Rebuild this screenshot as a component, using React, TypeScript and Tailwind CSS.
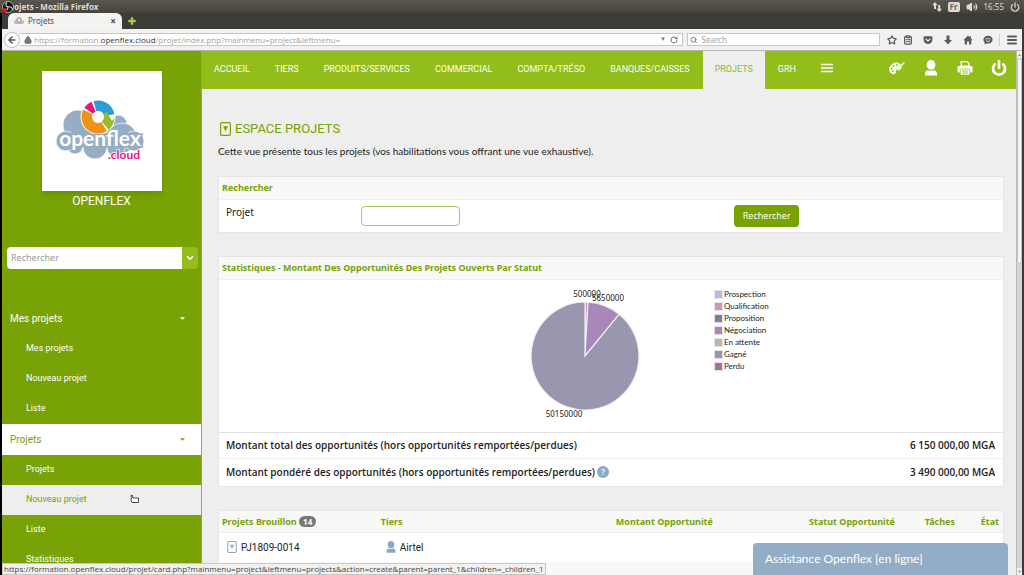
import type { ReactNode } from "react"
import {
  ArrowLeft,
  ChevronDown,
  ClipboardList,
  Lock,
  Menu,
  Power,
  RotateCw,
  Search,
  Star,
  Volume2,
} from "lucide-react"
import { FaGetPocket, FaPlus } from "react-icons/fa"

const navItems = [
  "ACCUEIL",
  "TIERS",
  "PRODUITS/SERVICES",
  "COMMERCIAL",
  "COMPTA/TRÉSO",
  "BANQUES/CAISSES",
  "PROJETS",
  "GRH",
]

const sideMenu = [
  { title: "Mes projets", open: false, items: ["Mes projets", "Nouveau projet", "Liste"] },
  { title: "Projets", open: true, items: ["Projets", "Nouveau projet", "Liste", "Statistiques"] },
]

const statuses = [
  { label: "Prospection", value: 0, color: "#bdb9dc" },
  { label: "Qualification", value: 500000, color: "#c99ab4" },
  { label: "Proposition", value: 0, color: "#778296" },
  { label: "Négociation", value: 5650000, color: "#a888bb" },
  { label: "En attente", value: 0, color: "#b6bba2" },
  { label: "Gagné", value: 50150000, color: "#9997b0" },
  { label: "Perdu", value: 0, color: "#a07a8a" },
]

const ui = "font-['Noto_Sans',sans-serif]"

function TitleBar() {
  return (
    <div className="flex h-[13px] shrink-0 items-center justify-between bg-linear-to-b from-[#59574d] to-[#45433c] pr-1 pl-0.5 text-[#dfdbd2]">
      <div className="flex items-center">
        <svg className="size-3" viewBox="0 0 12 12" aria-hidden="true">
          <circle cx="6" cy="6" r="5.5" fill="#111" stroke="#ddd" strokeWidth=".7" />
          <path d="M6 6C3 5 3.500 2.500 5 1.500M6 6c3-1 4.500 1 4.500 3M6 6c0 3-2 4-4 3" fill="none" stroke="#ddd" strokeWidth="1.100" />
          <circle cx="2.600" cy="9.200" r="2.300" fill="#e11" />
        </svg>
        <span className="text-[8px] leading-3 font-bold">ojets - Mozilla Firefox</span>
      </div>
      <div className="flex items-center gap-1.5 text-[8px] leading-3">
        <svg className="size-2.5" viewBox="0 0 10 10" fill="currentColor" aria-hidden="true">
          <path d="M3 0l2.800 3.200H4V7H2V3.200H.2zM7.200 10L4.400 6.800h1.800V3h2v3.800H10z" />
        </svg>
        <span className="rounded-xs bg-[#dfdbd2] px-0.5 leading-[10px] font-bold text-[#6b6960]">Fr</span>
        <Volume2 className="size-3 fill-current" />
        <span>16:55</span>
        <Power className="size-2.5" strokeWidth={3} />
      </div>
    </div>
  )
}

function TabStrip() {
  return (
    <div className="flex h-4 shrink-0 items-end bg-[#3c3b37] pl-1.5">
      <div className="flex h-4 w-[114px] items-center gap-1 rounded-t-md bg-[#f4f3f2] px-1.5 text-[#4c4c4c]">
        <svg className="h-2 w-2.5" viewBox="0 0 10 8" aria-hidden="true">
          <path d="M2 7a2 2 0 0 1 0-4 3 3 0 0 1 6 0 2 2 0 0 1 0 4z" fill="#a9bacf" />
          <circle cx="5" cy="3" r="1.500" fill="#fff" stroke="#ee9a3a" strokeWidth=".8" />
        </svg>
        <span className="grow text-[8px] leading-4">Projets</span>
        <button aria-label="Fermer l'onglet" className="text-[10px] leading-3 font-bold">×</button>
      </div>
      <button aria-label="Nouvel onglet" className="mb-1 ml-1.5 text-[#b4cf4a]">
        <FaPlus className="size-2 stroke-current stroke-[60]" />
      </button>
    </div>
  )
}

function Toolbar() {
  return (
    <div className="flex h-[21px] shrink-0 items-center bg-[#f2f1f0] pr-1 text-[#5b5b5b]">
      <button aria-label="Précédent" className="ml-0.5 flex size-4 shrink-0 items-center justify-center rounded-full border border-[#c4c2bf] bg-white">
        <ArrowLeft className="size-2.5" strokeWidth={4} />
      </button>
      <div className="flex h-[13px] min-w-0 grow items-center gap-0.5 border border-l-0 border-[#c9c7c4] bg-white px-1 text-[8px] text-[#a3a3a3]">
        <Lock className="size-2 shrink-0 fill-current text-[#777]" strokeWidth={3} />
        <span className="grow font-['Open_Sans',sans-serif] leading-3 whitespace-nowrap">
          https://formation.<span className="text-[#333]">openflex.cloud</span>/projet/index.php?mainmenu=project&amp;leftmenu=
        </span>
        <span className="pr-0.5 text-[6px] text-[#777]">▼</span>
        <RotateCw className="size-2 text-[#777]" strokeWidth={3} />
      </div>
      <div className="ml-1 flex h-[13px] w-[193px] items-center gap-1 border border-[#c9c7c4] bg-white px-0.5">
        <Search className="size-2 text-[#777]" strokeWidth={3} />
        <input aria-label="Search" placeholder="Search" className="w-full text-[8px] leading-3 outline-none placeholder:text-[#a3a3a3]" />
      </div>
      <div className="ml-[7px] flex items-center gap-2.5">
        <Star className="size-2.5" strokeWidth={3} />
        <ClipboardList className="-ml-1 size-2.5" strokeWidth={3} />
        <FaGetPocket className="size-2.5" />
        <svg className="size-2.5" viewBox="0 0 10 10" fill="currentColor" aria-hidden="true">
          <path d="M3.500.5h3V5h2.500L5 9.500 1 5h2.500z" />
        </svg>
        <svg className="size-2.5" viewBox="0 0 10 10" fill="currentColor" aria-hidden="true">
          <path d="M5 .5L.3 5.300h1.400V9.500h2.300V6.500h2v3h2.300V5.300h1.400L8 3.500V1.200H6.800v1.100z" />
        </svg>
        <svg className="size-2.5" viewBox="0 0 10 10" aria-hidden="true">
          <path d="M5 .8a4.500 3.900 0 0 0-3.200 6.700L1.500 9.500l2.200-1.100A4.500 3.900 0 1 0 5 .8z" fill="currentColor" />
          <path d="M2.500 3.800h5M2.800 5.200c1 1.600 3.400 1.600 4.400 0" fill="none" stroke="#f2f1f0" strokeWidth=".8" />
        </svg>
        <span className="-mx-1 h-3 w-px bg-[#d0cecb]" />
        <Menu className="size-3" strokeWidth={4} />
      </div>
    </div>
  )
}

function Logo() {
  return (
    <svg className="size-[120px] bg-white shadow-md" viewBox="0 0 120 120" role="img" aria-label="openflex.cloud">
      <g fill="#97adc6" stroke="#fff" strokeWidth=".7">
        <circle cx="36" cy="54" r="15" />
        <circle cx="76" cy="53" r="9" />
        <circle cx="80" cy="67" r="15" />
        <circle cx="33" cy="75" r="8" />
        <circle cx="74" cy="77" r="9" />
        <circle cx="53" cy="76" r="12" />
        <circle cx="24" cy="70" r="10" />
        <circle cx="92" cy="70" r="10" />
      </g>
      <path d="M24 62h68v14H24z" fill="#97adc6" />
      <circle cx="56" cy="46" r="17.500" fill="#fff" />
      <g fill="none" strokeWidth="10.500">
        <circle cx="56" cy="46" r="11.300" stroke="#2f9bd3" pathLength="360" strokeDasharray="96 264" strokeDashoffset="-254" />
        <circle cx="56" cy="46" r="11.300" stroke="#93bf25" pathLength="360" strokeDasharray="54 306" transform="rotate(-4 56 46)" />
        <circle cx="56" cy="46" r="11.300" stroke="#f09312" pathLength="360" strokeDasharray="150 210" strokeDashoffset="-57" />
        <circle cx="56" cy="46" r="11.300" stroke="#e5167f" pathLength="360" strokeDasharray="33 327" strokeDashoffset="-214" />
      </g>
      <text x="58" y="75" textAnchor="middle" fill="#fff" stroke="#97adc6" strokeWidth="3" paintOrder="stroke" className="font-['Lato',sans-serif] text-[21px] font-bold">
        openflex
      </text>
      <text x="98" y="88" textAnchor="end" fill="#e5167f" stroke="#fff" strokeWidth="1.500" paintOrder="stroke" className="font-['Lato',sans-serif] text-[12px] font-bold">
        .cloud
      </text>
    </svg>
  )
}

function Sidebar() {
  return (
    <aside className="flex w-[200px] shrink-0 flex-col border-r border-[#8fae4a] bg-[#78a206] pt-5 font-['Roboto',sans-serif] text-white">
      <div className="flex flex-col items-center">
        <Logo />
        <p className="mt-0.5 text-[12px] leading-4">OPENFLEX</p>
      </div>
      <form className="mt-[38px] mr-[3px] ml-[5px] flex h-6 overflow-hidden rounded-sm">
        <input
          aria-label="Rechercher"
          placeholder="Rechercher"
          className={`${ui} w-full min-w-0 bg-white px-1 text-[9px] text-gray-700 outline-none placeholder:text-[#9a9a9a]`}
        />
        <button type="button" aria-label="Options de recherche" className="flex w-4 shrink-0 items-center justify-center bg-[#95bd1a]">
          <ChevronDown className="size-2.5" strokeWidth={4} />
        </button>
      </form>
      <nav className="mt-[34px]">
        {sideMenu.map((group) => (
          <div key={group.title}>
            <a
              href="#"
              className={`flex h-[31px] items-center justify-between pr-4 pl-2 text-[10px] ${group.open ? "bg-white text-[#78a206]" : ""}`}
            >
              {group.title}
              <svg className="h-[3px] w-[5px]" viewBox="0 0 6 3" aria-hidden="true">
                <path d="M0 0h6L3 3z" fill="currentColor" />
              </svg>
            </a>
            {group.items.map((item) => (
              <a
                key={item}
                href="#"
                className={`flex h-[30px] items-center pl-6 text-[9px] ${group.open && item === "Nouveau projet" ? "bg-[#eee] text-[#78a206]" : ""}`}
              >
                {item}
              </a>
            ))}
          </div>
        ))}
      </nav>
    </aside>
  )
}

function UserIcon({ className }: { className: string }) {
  return (
    <svg className={className} viewBox="0 0 12 16" fill="currentColor" aria-hidden="true">
      <ellipse cx="6" cy="4.900" rx="4.400" ry="4.800" />
      <path d="M0 15.500v-2C0 11.500 1.500 10.300 3 9.900c1.700 1.200 4.300 1.200 6 0 1.500.4 3 1.600 3 3.600v2z" />
    </svg>
  )
}

function ProjectIcon({ className }: { className: string }) {
  return (
    <svg className={className} viewBox="0 0 11 14" fill="none" stroke="currentColor" aria-hidden="true">
      <rect x=".6" y=".6" width="9.800" height="12.800" rx="1.200" strokeWidth="1.200" />
      <path d="M3 4.300h5L6.500 7 5.500 9.700 4.500 7z" fill="currentColor" stroke="none" />
    </svg>
  )
}

function TopNav() {
  return (
    <header className="flex h-[38px] items-stretch bg-[#93bd1a] font-['Roboto',sans-serif] text-white">
      <nav className="flex gap-px text-[9px] whitespace-nowrap">
        {navItems.map((item) => (
          <a
            key={item}
            href="#"
            className={`flex items-center px-3 ${item === "PROJETS" ? "bg-[#eee] text-[#93bd1a]" : ""}`}
          >
            {item}
          </a>
        ))}
      </nav>
      <button aria-label="Plus" className="ml-3 pb-1">
        <svg className="h-3 w-3.5" viewBox="0 0 14 12" aria-hidden="true">
          <path d="M1 2.500h12M1 6h12M1 9.500h12" stroke="#fff" strokeWidth="1.600" />
        </svg>
      </button>
      <div className="ml-auto flex items-center gap-[18px] pr-[9px] pb-1">
        <button aria-label="Thème">
          <svg className="size-4" viewBox="0 0 16 16" aria-hidden="true">
            <path d="M11 4.500C9.500 2.800 6.500 2.200 3.800 4 .5 6 0 9.500 1.200 11.800c1.200 2.200 4 2.700 5 1.200.8-1.200-.2-2.200.6-3 .9-.9 2.200.4 3.700-.2 1.400-.6 2-2 1.700-3.400z" fill="#fff" stroke="#fff" strokeWidth=".8" />
            <g fill="#93bd1a">
              <circle cx="4.600" cy="6" r="1" />
              <circle cx="8" cy="4.900" r="1" />
              <circle cx="2.800" cy="8.700" r="1" />
              <circle cx="4" cy="11.300" r="1" />
            </g>
            <path d="M6.500 9.300c.2-1.600 1.400-2.500 3-2.300L14.500 2l1.500-.2-.5 1.700L10.800 8.200c-.6 1.400-2 2-4.300 1.100z" fill="#fff" stroke="#93bd1a" strokeWidth=".4" />
          </svg>
        </button>
        <button aria-label="Utilisateur">
          <UserIcon className="h-4 w-4" />
        </button>
        <button aria-label="Imprimer">
          <svg className="size-4" viewBox="0 0 16 16" aria-hidden="true">
            <path d="M3.500 1h7l2 2v3h-9z" fill="#fff" />
            <path d="M4.800 2.300h5l1.400 1.300v2H4.800z" fill="#93bd1a" />
            <rect x=".5" y="6" width="15" height="6.500" rx="1.200" fill="#fff" />
            <rect x="3.300" y="9" width="9.400" height="6" rx=".6" fill="#fff" stroke="#93bd1a" strokeWidth=".7" />
            <path d="M5 11h6M5 13h6" stroke="#93bd1a" strokeWidth=".9" />
          </svg>
        </button>
        <button aria-label="Déconnexion">
          <Power className="size-4" strokeWidth={4} />
        </button>
      </div>
    </header>
  )
}

function Panel({ children }: { children: ReactNode }) {
  return <section className="mb-[23px] border border-[#e6e6e6] bg-white">{children}</section>
}

function PanelTitle({ children }: { children: ReactNode }) {
  return (
    <h2 className="border-b border-[#eee] bg-[#f8f8f8] px-[3px] text-[9px] leading-[22px] font-bold text-[#78a206]">
      {children}
    </h2>
  )
}

function PieChart() {
  const total = statuses.reduce((sum, s) => sum + s.value, 0)
  const r = 54
  let angle = 0
  const slices = statuses
    .filter((s) => s.value > 0)
    .map((s) => {
      const start = angle
      angle += (s.value / total) * Math.PI * 2
      const large = angle - start > Math.PI ? 1 : 0
      const from = `${65 + r * Math.sin(start)} ${76 - r * Math.cos(start)}`
      const to = `${65 + r * Math.sin(angle)} ${76 - r * Math.cos(angle)}`
      return { ...s, d: `M65 76L${from}A${r} ${r} 0 ${large} 1 ${to}z` }
    })

  return (
    <div className="ml-[38%] flex gap-16 pl-[3px] text-[8px] text-[#222]">
      <svg className="h-[152px] w-[130px] shrink-0" viewBox="0 0 130 152" role="img" aria-label="Opportunités par statut">
        {slices.map((s) => (
          <path key={s.label} d={s.d} fill={s.color} stroke="#f3eef5" strokeWidth="1.200" />
        ))}
        <g textAnchor="middle" fill="#222">
          <text x="67" y="17">500000</text>
          <text x="88" y="21">5650000</text>
          <text x="44" y="137">50150000</text>
        </g>
      </svg>
      <ul className="mt-2 font-['Lato',sans-serif]">
        {statuses.map((s) => (
          <li key={s.label} className="flex items-center leading-3">
            <span className="size-[9px] border border-[#e6e0ea]" style={{ backgroundColor: s.color }} />
            <span className="pl-px">{s.label}</span>
          </li>
        ))}
      </ul>
    </div>
  )
}

function Content() {
  return (
    <main className="pt-8 pr-3 pl-4 text-[#222]">
      <h1 className="flex items-center gap-1 font-['Roboto',sans-serif] text-[13px] leading-4 text-[#78a206]">
        <ProjectIcon className="ml-0.5 h-3.5 w-[11px]" />
        ESPACE PROJETS
      </h1>
      <p className="mt-1.5 mb-[17px] font-['Lato',sans-serif] text-[10px] leading-4">
        Cette vue présente tous les projets (vos habilitations vous offrant une vue exhaustive).
      </p>

      <Panel>
        <PanelTitle>Rechercher</PanelTitle>
        <form className="grid h-8 grid-cols-[35fr_97fr_68fr] items-center px-[7px] text-[10px]">
          <label htmlFor="projet" className="self-start leading-6">Projet</label>
          <input id="projet" className="h-5 w-[99px] rounded-sm border border-[#a9c763] bg-white px-1 outline-none" />
          <button type="button" className="h-[22px] w-[65px] rounded-sm bg-[#78a206] text-[9px] text-white">
            Rechercher
          </button>
        </form>
      </Panel>

      <Panel>
        <PanelTitle>Statistiques - Montant Des Opportunités Des Projets Ouverts Par Statut</PanelTitle>
        <PieChart />
        <table className="w-full font-['Open_Sans',sans-serif] text-[10px] font-semibold">
          <tbody>
            <tr className="h-[26px] border-t border-[#e2e2e2]">
              <td className="pl-[7px]">Montant total des opportunités (hors opportunités remportées/perdues)</td>
              <td className="pr-2 text-right">6 150 000,00 MGA</td>
            </tr>
            <tr className="h-[27px] border-t border-[#eee]">
              <td className="pl-[7px]">
                <span className="flex items-center gap-0.5">
                  Montant pondéré des opportunités (hors opportunités remportées/perdues)
                  <span className="flex size-3 items-center justify-center rounded-full bg-[#8ba8c6] text-[9px] leading-3 text-white">
                    ?
                  </span>
                </span>
              </td>
              <td className="pr-2 text-right">3 490 000,00 MGA</td>
            </tr>
          </tbody>
        </table>
      </Panel>

      <Panel>
        <table className="w-full table-fixed text-[9px]">
          <thead>
            <tr className="h-[22px] bg-[#f8f8f8] text-[#78a206]">
              <th className="w-[20%] pl-[3px] text-left">
                Projets Brouillon{" "}
                <span className="rounded-full bg-[#777] px-1 text-[8px] text-white">14</span>
              </th>
              <th className="w-[19%] pl-[5px] text-left">Tiers</th>
              <th className="w-[24%] text-right">Montant Opportunité</th>
              <th className="text-right">Statut Opportunité</th>
              <th className="w-[60px] text-right">Tâches</th>
              <th className="w-12 pr-1 text-right">État</th>
            </tr>
          </thead>
          <tbody className="font-['Roboto',sans-serif] text-[10px]">
            <tr className="h-[29px] border-t border-[#eee]">
              <td className="pl-2">
                <a href="#" className="flex items-center gap-1">
                  <ProjectIcon className="h-3 w-2.5 text-[#8ba8c6]" />
                  PJ1809-0014
                </a>
              </td>
              <td className="pl-2.5">
                <a href="#" className="flex items-center gap-1">
                  <UserIcon className="h-3 w-2.5 text-[#8ba8c6]" />
                  Airtel
                </a>
              </td>
              <td colSpan={4} />
            </tr>
            <tr className="h-[29px] bg-[#f8f8f8]">
              <td colSpan={6} />
            </tr>
          </tbody>
        </table>
      </Panel>
    </main>
  )
}

function Scrollbar() {
  return (
    <div className="flex w-1.5 shrink-0 flex-col items-center justify-between border-l border-[#bbb] bg-[#d6d4d1] text-[4px] text-[#777]">
      <span className="w-full bg-[#f2f1f0] text-center leading-[7px]">▲</span>
      <span className="h-[206px] w-full rounded-sm border border-[#c4c2bf] bg-[#f6f5f4]" />
      <span className="grow" />
      <span className="w-full bg-[#f2f1f0] text-center leading-[7px]">▼</span>
    </div>
  )
}

export default function App() {
  return (
    <div className={`${ui} relative flex h-screen flex-col overflow-hidden bg-[#3c3b37]`}>
      <TitleBar />
      <div className="flex min-h-0 grow flex-col border-r-2 border-l-2 border-r-[#3c3b37] border-l-black">
        <TabStrip />
        <Toolbar />
        <div className="flex min-h-0 grow border-t border-[#b5b5b5] bg-[#eee]">
          <Sidebar />
          <div className="min-w-0 grow overflow-hidden">
            <TopNav />
            <Content />
          </div>
          <Scrollbar />
        </div>
      </div>

      <button className="absolute right-4 bottom-0 h-8 w-[255px] rounded-t-sm bg-[#94adc6] px-3 text-left font-['Lato',sans-serif] text-[12px] text-white">
        Assistance Openflex [en ligne]
      </button>
      <div className="absolute bottom-0 left-0.5 border border-[#c9c7c4] bg-[#f2f1f0] pr-0.5 pl-px font-['Open_Sans',sans-serif] text-[8px] leading-[10px] text-[#444]">
        https://formation.openflex.cloud/projet/card.php?mainmenu=project&amp;leftmenu=projects&amp;action=create&amp;parent=parent_1&amp;children=_children_1
      </div>
      <svg className="absolute top-[494px] left-[130px] h-2.5 w-2.5" viewBox="0 0 10 10" aria-hidden="true">
        <path d="M1 1.500h1.500l.5 2.500h5.500v4.500H2L.8 6 1.500 5z" fill="#fff" stroke="#333" strokeWidth=".9" strokeLinejoin="round" />
      </svg>
    </div>
  )
}
